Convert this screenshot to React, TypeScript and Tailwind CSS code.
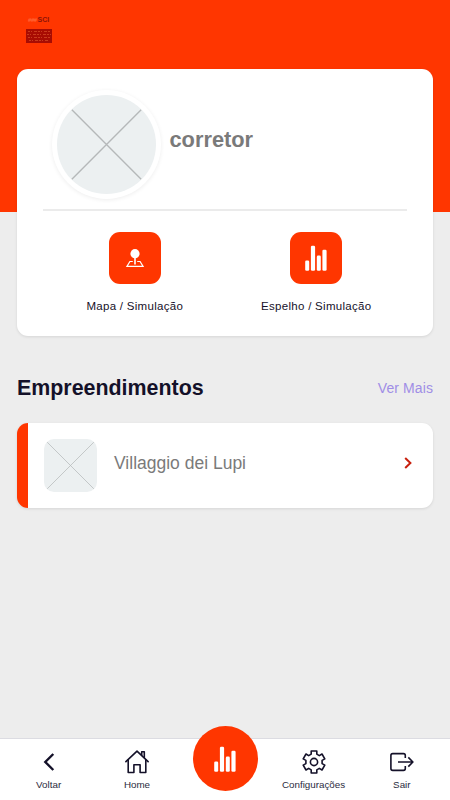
import React from 'react';

const BarsIcon = () => (
  <svg className="h-[26px] w-[24px]" viewBox="0 0 24 26" fill="#fff">
    <rect x="1.2" y="15.4" width="4" height="10.3" rx="1.3" />
    <rect x="6.9" y="0.7" width="4.2" height="25" rx="1.3" />
    <rect x="12.8" y="10.6" width="4" height="15.1" rx="1.3" />
    <rect x="18.4" y="4.8" width="4.2" height="20.9" rx="1.3" />
  </svg>
);

const JoystickIcon = () => (
  <svg className="h-[20px] w-[20px]" viewBox="0 0 20 20" fill="none" stroke="#fff" strokeWidth="1.2">
    <circle cx="10" cy="5.7" r="4.6" fill="#fff" stroke="none" />
    <path d="M10 9v7.5" strokeWidth="1.6" />
    <path d="M7.8 13.5H4.9L1.9 18.4H18.1L15.1 13.5H12.2" />
  </svg>
);

const Placeholder = ({ inset }: { inset: number }) => (
  <svg className="h-full w-full" viewBox="0 0 100 100" stroke="#b5b8b9" strokeWidth="1.4">
    <path d={`M${inset} ${inset}L${100 - inset} ${100 - inset}M${100 - inset} ${inset}L${inset} ${100 - inset}`} />
  </svg>
);

const Logo = () => (
  <div className="flex w-[26px] flex-col">
    <div className="flex h-[8px] items-center pl-[2px] text-[7px] leading-[8px] font-bold">
      <span className="w-[9.5px] text-[6px] tracking-[-0.4px] text-[#ff6a3c]">###</span>
      <span className="text-[#8f1408]">SCI</span>
    </div>
    <svg className="mt-[5px] h-[14px] w-[26px]" viewBox="0 0 26 14">
      <rect width="26" height="14" fill="#a80c03" />
      <path
        d="M2 2.5h22M1 5.5h24M2 8.5h22M3 11.5h20"
        stroke="#c93a1c"
        strokeWidth="1"
        strokeDasharray="2 1 1 2 3 1"
      />
    </svg>
  </div>
);

const navIcon = 'h-6 w-6';

const NavItem = ({ label, children }: { label: string; children: React.ReactNode }) => (
  <div className="flex flex-1 flex-col items-center pt-[10.5px] text-[9.8px] leading-[14px] text-[#2b2b3d]">
    {children}
    <span className="mt-[4px]">{label}</span>
  </div>
);

const Shortcut = ({ label, children }: { label: string; children: React.ReactNode }) => (
  <div className="flex flex-1 flex-col items-center">
    <div className="flex h-[52px] w-[52px] items-center justify-center rounded-[11px] bg-[#ff3600]">{children}</div>
    <span className="mt-[14px] text-[11.5px] leading-4 tracking-[0.29px] whitespace-nowrap text-[#161129]">
      {label}
    </span>
  </div>
);

function App() {
  return (
    <div className="flex h-[800px] w-[450px] flex-col overflow-hidden bg-[linear-gradient(#ff3600_212px,#ededed_212px)] font-['Liberation_Sans',sans-serif]">
      <header className="h-[69px] pt-[16px] pl-[26px]">
        <Logo />
      </header>

      <main className="flex-1 px-[17px]">
        <section className="h-[266.5px] rounded-[11px] bg-white px-[26px] pt-[21px] shadow-[0_1px_3px_rgba(0,0,0,0.1)]">
          <div className="flex h-[121px] items-start border-b-2 border-[#ebebeb] pl-[9px]">
            <div className="h-[109px] w-[109px] shrink-0 rounded-full bg-white p-[5px] shadow-[0_1px_4px_rgba(0,0,0,0.07)]">
              <div className="h-full w-full overflow-hidden rounded-full bg-[#ecf0f1]">
                <Placeholder inset={15} />
              </div>
            </div>
            <h1 className="mt-[37px] ml-[8.5px] text-[21.8px] leading-[26px] font-bold text-[#7a7a7a]">corretor</h1>
          </div>
          <div className="mt-[21px] flex pl-px">
            <Shortcut label="Mapa / Simulação">
              <JoystickIcon />
            </Shortcut>
            <Shortcut label="Espelho / Simulação">
              <BarsIcon />
            </Shortcut>
          </div>
        </section>

        <div className="mt-[39.5px] flex h-[27px] items-center justify-between">
          <h2 className="text-[21.4px] leading-[27px] font-bold text-[#141129]">Empreendimentos</h2>
          <a className="text-[14px] tracking-[0.1px] text-[#a08de6]">Ver Mais</a>
        </div>

        <div className="mt-[20.5px] flex h-[85px] items-center rounded-[11px] border-l-[11px] border-[#ff3600] bg-white pr-[21px] pl-[16px] shadow-[0_1px_3px_rgba(0,0,0,0.1)]">
          <div className="h-[53px] w-[53px] overflow-hidden rounded-[10px] bg-[#ecf0f1]">
            <Placeholder inset={6} />
          </div>
          <span className="mb-[3px] ml-[17px] flex-1 text-[17.5px] text-[#7a7a7a]">Villaggio dei Lupi</span>
          <svg className="mb-[5px] h-[12px] w-[8px]" viewBox="0 0 8 12" fill="none" stroke="#c8200e" strokeWidth="2">
            <path d="M1.2 1L6.4 6L1.2 11" />
          </svg>
        </div>
      </main>

      <nav className="flex h-[62px] border-t border-[#dcdce2] bg-white pr-[4px] pl-[4.5px]">
        <NavItem label="Voltar">
          <svg className={navIcon} viewBox="0 0 24 24" fill="none" stroke="#141129" strokeWidth="2.4">
            <path d="M16.3 4L8.3 12L16.3 20" />
          </svg>
        </NavItem>
        <NavItem label="Home">
          <svg className={navIcon} viewBox="0 0 24 24" fill="none" stroke="#141129" strokeWidth="1.6" strokeLinejoin="round" strokeLinecap="round">
            <path d="M0.9 11.7L12 1.2L23.1 11.7" />
            <path d="M3.2 10V22.5H8.9V14.8H15.1V22.5H20.8V10" />
            <path d="M16.7 5V1.8H19.3V7.5" />
          </svg>
        </NavItem>
        <div className="flex flex-1 justify-center">
          <div className="-mt-[13px] flex h-[65px] w-[65px] shrink-0 items-center justify-center rounded-full bg-[#ff3600]">
            <BarsIcon />
          </div>
        </div>
        <NavItem label="Configurações">
          <svg className={navIcon} viewBox="0 0 24 24" fill="none" stroke="#141129" strokeWidth="1.6" strokeLinejoin="round">
            <path d="M9.2 1H14.8V4.1L17.3 5.6L20 4L22.8 8.9L20.1 10.4V13.6L22.8 15.1L20 20L17.3 18.4L14.8 19.9V23H9.2V19.9L6.7 18.4L4 20L1.2 15.1L3.9 13.6V10.4L1.2 8.9L4 4L6.7 5.6L9.2 4.1Z" />
            <circle cx="12" cy="12" r="3.6" />
          </svg>
        </NavItem>
        <NavItem label="Sair">
          <svg className={navIcon} viewBox="0 0 24 24" fill="none" stroke="#141129" strokeWidth="1.6" strokeLinejoin="round">
            <path d="M15.3 8V5.4Q15.3 3.6 13.5 3.6H2.7Q0.9 3.6 0.9 5.4V18.6Q0.9 20.4 2.7 20.4H13.5Q15.3 20.4 15.3 18.6V16" />
            <path d="M8 12H22.6M18.3 7.4L22.9 12L18.3 16.6" />
          </svg>
        </NavItem>
      </nav>
    </div>
  );
}

export default App;
